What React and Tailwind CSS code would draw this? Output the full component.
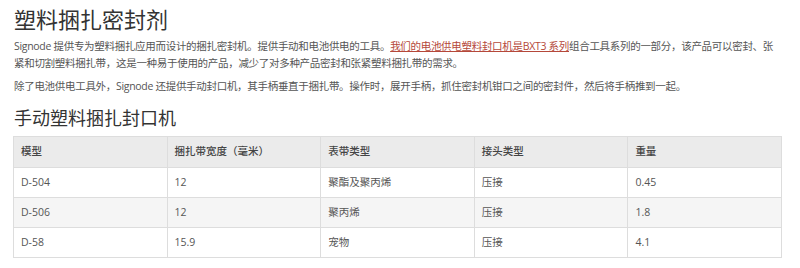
const rows = [
  { model: "D-504", width: "12", strap: "聚酯及聚丙烯", joint: "压接", weight: "0.45" },
  { model: "D-506", width: "12", strap: "聚丙烯", joint: "压接", weight: "1.8" },
  { model: "D-58", width: "15.9", strap: "宠物", joint: "压接", weight: "4.1" },
];

const font = { fontFamily: '"Open Sans", "Noto Sans CJK SC", sans-serif' };

function App() {
  return (
    <div
      className="w-[800px] h-[268px] overflow-hidden bg-white text-[#555] px-[14px]"
      style={font}
    >
      <h1 className="text-[22px] leading-[28px] pt-[5px] text-[#333] font-normal whitespace-nowrap">
        塑料捆扎密封剂
      </h1>

      <p className="text-[10.5px] leading-[17px] mt-[5px] tracking-[-0.3px] whitespace-nowrap">
        Signode 提供专为塑料捆扎应用而设计的捆扎密封机。提供手动和电池供电的工具。
        <a className="text-[#b5483a] underline">我们的电池供电塑料封口机是BXT3 系列</a>
        组合工具系列的一部分，该产品可以密封、张
        <br />
        紧和切割塑料捆扎带，这是一种易于使用的产品，减少了对多种产品密封和张紧塑料捆扎带的需求。
      </p>

      <p className="text-[10.5px] leading-[17px] mt-[6px] tracking-[-0.3px] whitespace-nowrap">
        除了电池供电工具外，Signode 还提供手动封口机，其手柄垂直于捆扎带。操作时，展开手柄，抓住密封机钳口之间的密封件，然后将手柄推到一起。
      </p>

      <h2 className="text-[18px] leading-[26px] mt-[10px] text-[#333] font-normal whitespace-nowrap">
        手动塑料捆扎封口机
      </h2>

      <table className="w-[769px] -ml-[1px] mt-[5px] border-collapse text-[10.5px] table-fixed">
        <thead>
          <tr className="bg-[#ebebeb] h-[31px]">
            <th className="border border-[#ddd] text-left font-medium px-[7px] text-[#444]">模型</th>
            <th className="border border-[#ddd] text-left font-medium px-[7px] text-[#444]">捆扎带宽度（毫米）</th>
            <th className="border border-[#ddd] text-left font-medium px-[7px] text-[#444]">表带类型</th>
            <th className="border border-[#ddd] text-left font-medium px-[7px] text-[#444]">接头类型</th>
            <th className="border border-[#ddd] text-left font-medium px-[7px] text-[#444]">重量</th>
          </tr>
        </thead>
        <tbody>
          {rows.map((r, i) => (
            <tr key={r.model} className={i === 1 ? "bg-[#f5f5f5] h-[30px]" : "bg-white h-[30px]"}>
              <td className="border border-[#ddd] px-[7px]">{r.model}</td>
              <td className="border border-[#ddd] px-[7px]">{r.width}</td>
              <td className="border border-[#ddd] px-[7px]">{r.strap}</td>
              <td className="border border-[#ddd] px-[7px]">{r.joint}</td>
              <td className="border border-[#ddd] px-[7px]">{r.weight}</td>
            </tr>
          ))}
        </tbody>
      </table>
    </div>
  );
}

export default App;
